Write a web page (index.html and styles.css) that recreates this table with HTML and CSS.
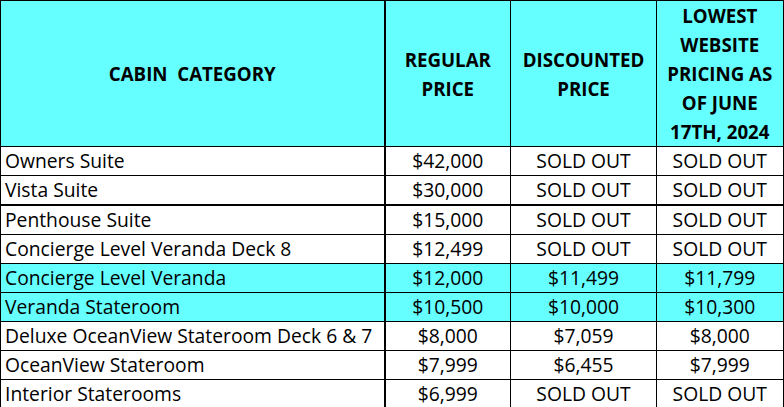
FILE: index.html
```html
<!DOCTYPE html>
<html>
<head>
<meta charset="utf-8">
<link rel="stylesheet" href="styles.css">
</head>
<body>
<table class="pricing">
  <colgroup>
    <col class="c1"><col class="c2"><col class="c3"><col class="c4">
  </colgroup>
  <thead>
    <tr class="head">
      <th class="cat">CABIN&nbsp; CATEGORY</th>
      <th>REGULAR<br>PRICE</th>
      <th>DISCOUNTED<br>PRICE</th>
      <th>LOWEST<br>WEBSITE<br>PRICING AS<br>OF JUNE<br>17TH, 2024</th>
    </tr>
  </thead>
  <tbody>
    <tr><td class="cat">Owners Suite</td><td>$42,000</td><td>SOLD OUT</td><td>SOLD OUT</td></tr>
    <tr class="thick"><td class="cat">Vista Suite</td><td>$30,000</td><td>SOLD OUT</td><td>SOLD OUT</td></tr>
    <tr><td class="cat">Penthouse Suite</td><td>$15,000</td><td>SOLD OUT</td><td>SOLD OUT</td></tr>
    <tr><td class="cat">Concierge Level Veranda Deck 8</td><td>$12,499</td><td>SOLD OUT</td><td>SOLD OUT</td></tr>
    <tr class="hl"><td class="cat">Concierge Level Veranda</td><td>$12,000</td><td>$11,499</td><td>$11,799</td></tr>
    <tr class="hl"><td class="cat">Veranda Stateroom</td><td>$10,500</td><td>$10,000</td><td>$10,300</td></tr>
    <tr><td class="cat">Deluxe OceanView Stateroom Deck 6 &amp; 7</td><td>$8,000</td><td>$7,059</td><td>$8,000</td></tr>
    <tr><td class="cat">OceanView Stateroom</td><td>$7,999</td><td>$6,455</td><td>$7,999</td></tr>
    <tr><td class="cat">Interior Staterooms</td><td>$6,999</td><td>SOLD OUT</td><td>SOLD OUT</td></tr>
  </tbody>
</table>
</body>
</html>
```
FILE: styles.css
```css
html, body {
  margin: 0;
  padding: 0;
  background: #ffffff;
}
.pricing {
  border-collapse: collapse;
  table-layout: fixed;
  width: 783px;
  font-family: "Open Sans", "Liberation Sans", sans-serif;
  font-size: 19.3px;
  color: #000;
}
.c1 { width: 384px; }
.c2 { width: 126px; }
.c3 { width: 146px; }
.c4 { width: 127px; }
.pricing th, .pricing td {
  border: 1px solid #000;
  padding: 0 4px;
  text-align: center;
  vertical-align: middle;
  white-space: nowrap;
  overflow: hidden;
}
.pricing th:last-child, .pricing td:last-child {
  border-right-width: 2px;
}
.pricing th.cat, .pricing td.cat {
  border-right-width: 2px;
}
.pricing td.cat {
  text-align: left;
  padding-left: 4px;
}
.head th {
  background: #66ffff;
  font-weight: bold;
  font-size: 18.7px;
  height: 144px;
  line-height: 29px;
  padding-top: 0;
  padding-bottom: 0;
}
.pricing tbody tr {
  height: 29px;
}
.pricing tbody td {
  height: 28px;
  line-height: 28px;
}
.thick td {
  border-bottom-width: 2px;
}
.hl td {
  background: #66ffff;
}
```
